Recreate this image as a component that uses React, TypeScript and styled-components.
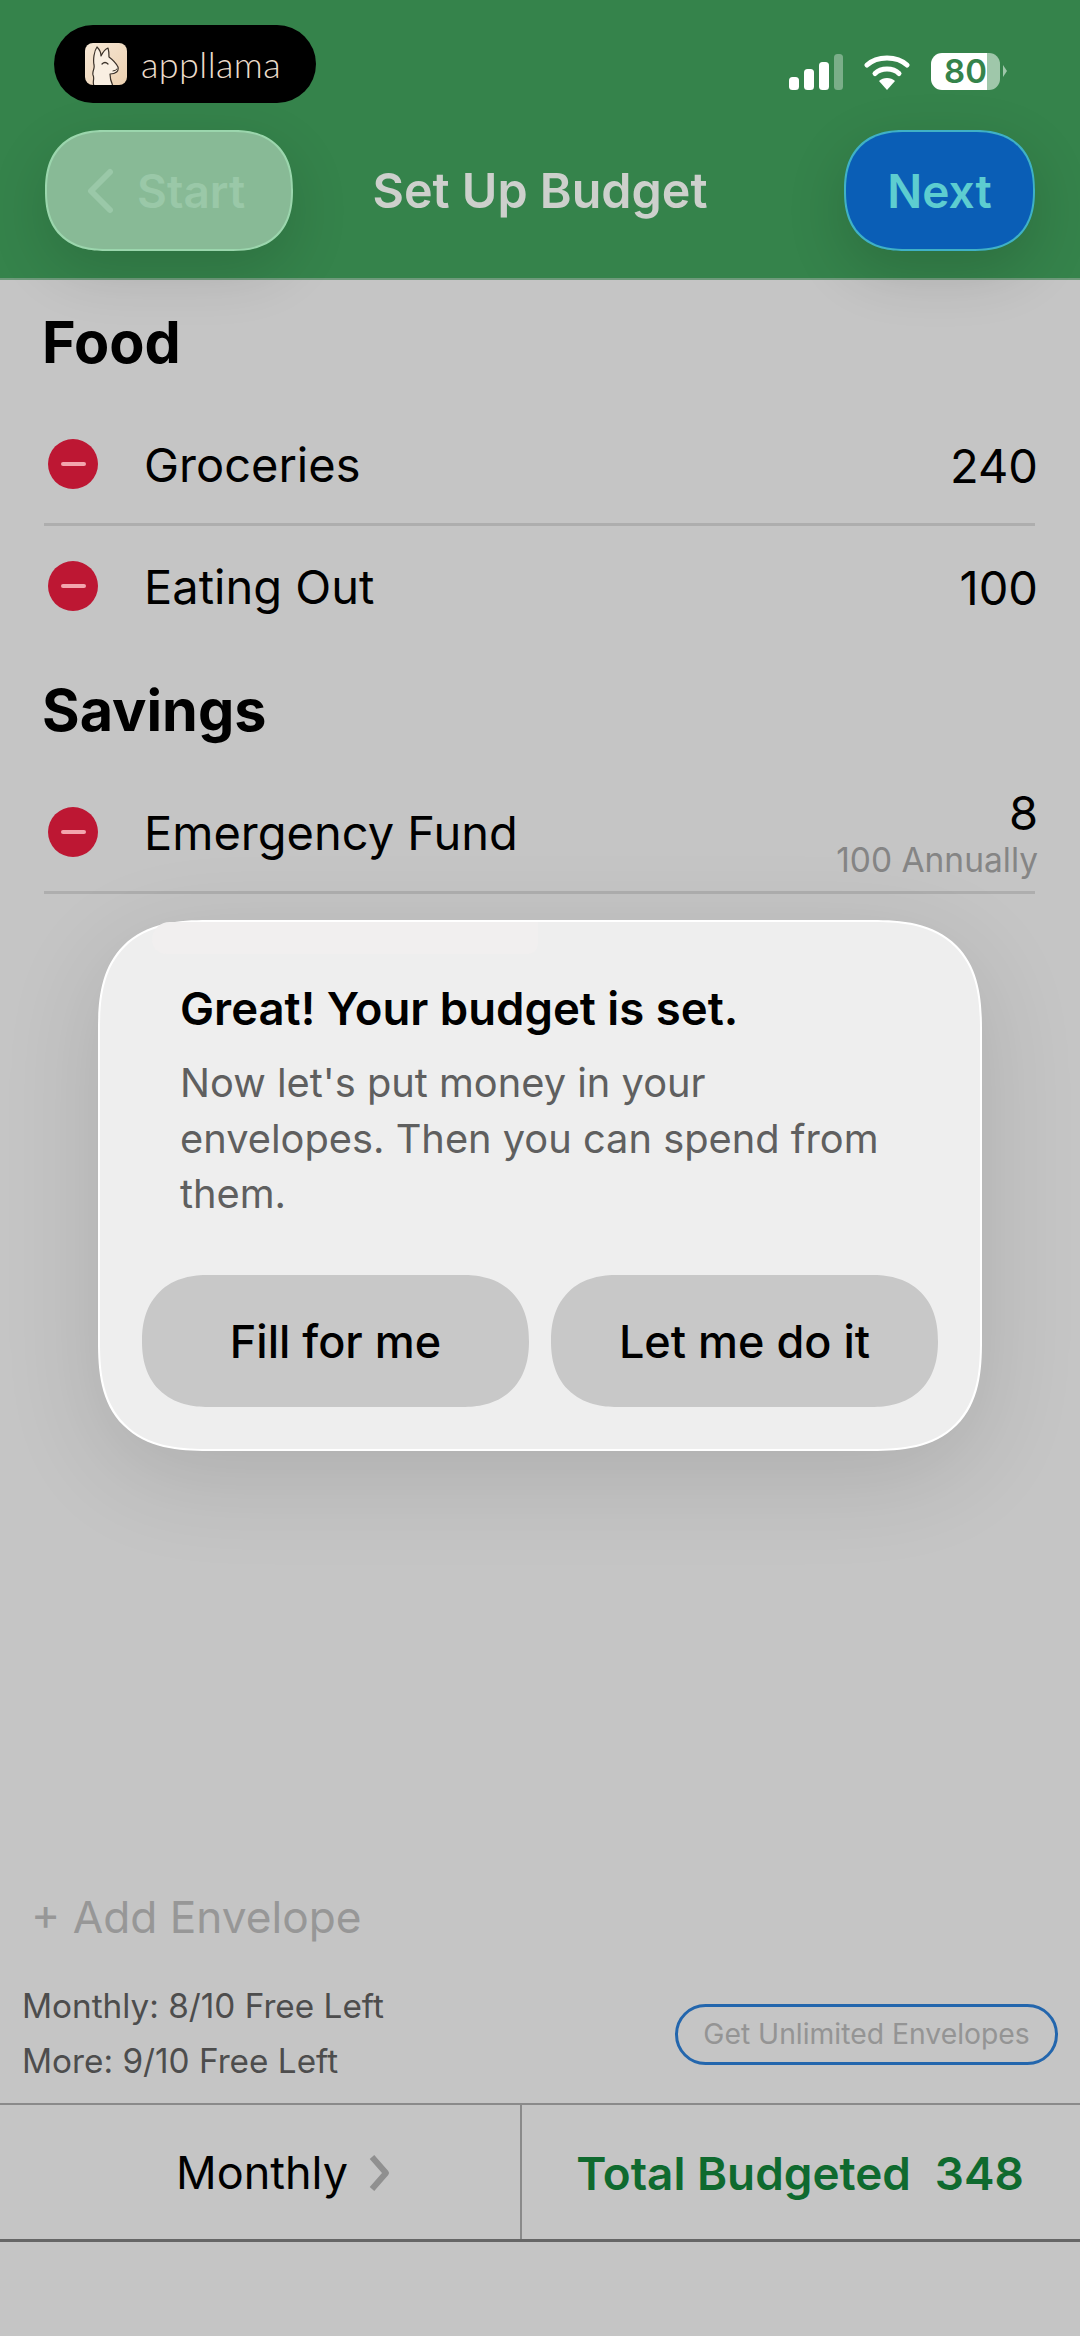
import { FC } from 'react';
import styled, { createGlobalStyle } from 'styled-components';

type IEnvelopeRow = {
  name: string;
  amount: string;
  note?: string;
  divided?: boolean;
};

const GlobalStyle = createGlobalStyle`
  html, body {
    margin: 0;
    padding: 0;
    background: #c5c5c5;
  }
  * {
    box-sizing: border-box;
  }
`;

const EnvelopeRow: FC<IEnvelopeRow> = ({ name, amount, note, divided }) => {
  return (
    <Row $divided={divided}>
      <RemoveBadge>
        <RemoveDash />
      </RemoveBadge>
      <RowName>{name}</RowName>
      <RowAmount>
        <span>{amount}</span>
        {note && <RowNote>{note}</RowNote>}
      </RowAmount>
    </Row>
  );
};

const LlamaIcon = () => (
  <svg width="42" height="42" viewBox="0 0 42 42">
    <defs>
      <linearGradient id="llamaBg" x1="0" y1="0" x2="1" y2="1">
        <stop offset="0" stopColor="#f6e8d6" />
        <stop offset="1" stopColor="#ecd0b0" />
      </linearGradient>
      <clipPath id="llamaClip">
        <rect width="42" height="42" rx="8" />
      </clipPath>
    </defs>
    <rect width="42" height="42" rx="8" fill="url(#llamaBg)" />
    <path
      d="M9 43 C7 38 10 36 8 32 C7 28 10 26 9 22 C8 17 9 8 12 4 C15 7 16 11 16 13 C18 9 20 6 23 5 C24 8 24 11 24 14 C28 17 31 20 33 24 C34 28 31 31 25 31 C25 35 26 39 28 43 Z"
      fill="#f9efe2"
      stroke="#3a3129"
      strokeWidth="1.2"
      strokeLinejoin="round"
      clipPath="url(#llamaClip)"
    />
    <path d="M17 21 Q20 18 23 21" fill="none" stroke="#3a3129" strokeWidth="1.2" strokeLinecap="round" />
    <path d="M28 28 Q30.5 28 32 26" fill="none" stroke="#3a3129" strokeWidth="1" strokeLinecap="round" />
  </svg>
);

const SignalIcon = () => (
  <svg width="54" height="36" viewBox="0 0 54 36">
    <rect x="0" y="23" width="10" height="13" rx="3.5" fill="#fff" />
    <rect x="15" y="15" width="10" height="21" rx="3.5" fill="#fff" />
    <rect x="30" y="8" width="10" height="28" rx="3.5" fill="#fff" />
    <rect x="45" y="0" width="9" height="36" rx="3.5" fill="#fff" fillOpacity="0.35" />
  </svg>
);

const WifiIcon = () => (
  <svg width="46" height="36" viewBox="0 0 46 36">
    <path d="M3 11 C13 1.5 33 1.5 43 11" fill="none" stroke="#fff" strokeWidth="5" strokeLinecap="round" />
    <path d="M11 19.5 C17 13.5 29 13.5 35 19.5" fill="none" stroke="#fff" strokeWidth="5" strokeLinecap="round" />
    <path d="M15 27 C19 23 27 23 31 27 L23 36 Z" fill="#fff" />
  </svg>
);

const BackChevron = () => (
  <svg width="30" height="46" viewBox="0 0 30 46">
    <path d="M25 4 L6 23 L25 42" fill="none" stroke="#9ac8a8" strokeWidth="6" strokeLinecap="round" strokeLinejoin="round" />
  </svg>
);

const ForwardChevron = () => (
  <svg width="22" height="36" viewBox="0 0 22 36">
    <path d="M4 2 L18 18 L4 34" fill="none" stroke="#909090" strokeWidth="6" strokeLinejoin="round" />
  </svg>
);

export default function App() {
  return (
    <Screen>
      <GlobalStyle />
      <Header>
        <StatusBar>
          <AppPill>
            <LlamaIcon />
            <AppName>appllama</AppName>
          </AppPill>
          <StatusGroup>
            <SignalIcon />
            <WifiIcon />
            <Battery>
              <BatteryLabel>80</BatteryLabel>
              <BatteryNub />
            </Battery>
          </StatusGroup>
        </StatusBar>
        <NavBar>
          <StartButton>
            <BackChevron />
            <span>Start</span>
          </StartButton>
          <NavTitle>Set Up Budget</NavTitle>
          <NextButton>Next</NextButton>
        </NavBar>
      </Header>

      <Content>
        <SectionTitle>Food</SectionTitle>
        <EnvelopeRow name="Groceries" amount="240" divided />
        <EnvelopeRow name="Eating Out" amount="100" />
        <SectionTitle $spaced>Savings</SectionTitle>
        <EnvelopeRow name="Emergency Fund" amount="8" note="100 Annually" divided />
      </Content>

      <Spacer />

      <AddEnvelope>+ Add Envelope</AddEnvelope>
      <LimitsRow>
        <LimitsText>
          <div>Monthly: 8/10 Free Left</div>
          <div>More: 9/10 Free Left</div>
        </LimitsText>
        <UnlimitedButton>Get Unlimited Envelopes</UnlimitedButton>
      </LimitsRow>

      <BottomBar>
        <PeriodCell>
          <span>Monthly</span>
          <ForwardChevron />
        </PeriodCell>
        <TotalCell>
          <span>Total Budgeted</span>
          <span>348</span>
        </TotalCell>
      </BottomBar>
      <BottomInset />

      <Modal>
        <ModalTab />
        <ModalTitle>Great! Your budget is set.</ModalTitle>
        <ModalBody>Now let's put money in your envelopes. Then you can spend from them.</ModalBody>
        <ModalActions>
          <ModalButton>Fill for me</ModalButton>
          <ModalButton>Let me do it</ModalButton>
        </ModalActions>
      </Modal>
    </Screen>
  );
}

const Screen = styled.div`
  position: relative;
  width: 1080px;
  height: 2336px;
  display: flex;
  flex-direction: column;
  overflow: hidden;
  background: #c5c5c5;
  font-family: Inter, 'Liberation Sans', sans-serif;
  color: #000;
`;
const Header = styled.header`
  height: 280px;
  flex-shrink: 0;
  padding: 25px 45px 0;
  background: #35834b;
  border-bottom: 2px solid #6f9a7b;
`;
const StatusBar = styled.div`
  display: flex;
  justify-content: space-between;
  align-items: flex-start;
  height: 105px;
`;
const AppPill = styled.div`
  width: 262px;
  height: 78px;
  margin-left: 9px;
  padding-left: 31px;
  display: flex;
  align-items: center;
  gap: 14px;
  border-radius: 39px;
  background: #000;
`;
const AppName = styled.span`
  font-family: Lato, Inter, sans-serif;
  font-weight: 300;
  font-size: 36px;
  letter-spacing: 0.4px;
  color: #ecdccb;
`;
const StatusGroup = styled.div`
  display: flex;
  align-items: center;
  gap: 21px;
  margin: 28px 35px 0 0;
`;
const Battery = styled.div`
  position: relative;
  width: 69px;
  height: 37px;
  display: flex;
  align-items: center;
  justify-content: center;
  border-radius: 11px;
  background: linear-gradient(90deg, #fff 0 81%, #9fc7aa 81% 100%);
`;
const BatteryLabel = styled.span`
  font-size: 33px;
  font-weight: 600;
  color: #35834b;
  line-height: 1;
`;
const BatteryNub = styled.div`
  position: absolute;
  left: 72px;
  top: 12px;
  border-left: 4px solid #9fc7aa;
  border-top: 6px solid transparent;
  border-bottom: 6px solid transparent;
`;
const NavBar = styled.div`
  display: grid;
  grid-template-columns: 1fr auto 1fr;
  align-items: center;
  height: 121px;
`;
const StartButton = styled.div`
  width: 248px;
  height: 121px;
  padding-left: 38px;
  display: flex;
  align-items: center;
  gap: 22px;
  border-radius: 60px;
  corner-shape: superellipse(1.25);
  background: #88ba96;
  border: 2px solid #9bd6ad;
  box-shadow: 0 20px 60px rgba(0, 0, 0, 0.14);
  color: #9ac8a8;
  font-size: 46px;
  font-weight: 600;
`;
const NavTitle = styled.h1`
  margin: 0;
  font-size: 48.4px;
  font-weight: 600;
  color: #cdd0cc;
`;
const NextButton = styled.div`
  width: 191px;
  height: 121px;
  justify-self: end;
  display: flex;
  align-items: center;
  justify-content: center;
  border-radius: 60px;
  corner-shape: superellipse(1.25);
  background: #0a5eb6;
  border: 2px solid #3fb1c6;
  box-shadow: 0 20px 60px rgba(0, 0, 0, 0.16);
  color: #5dcdd0;
  font-size: 46px;
  font-weight: 600;
`;
const Content = styled.main`
  padding: 28px 45px 0 44px;
`;
const SectionTitle = styled.h2<{ $spaced?: boolean }>`
  margin: ${({ $spaced }) => ($spaced ? '28px' : '0')} 0 28px -2px;
  font-size: 57.5px;
  line-height: 68px;
  font-weight: 700;
`;
const Row = styled.div<{ $divided?: boolean }>`
  height: 122px;
  display: flex;
  align-items: center;
  border-bottom: 3px solid ${({ $divided }) => ($divided ? '#aeaeae' : 'transparent')};
`;
const RemoveBadge = styled.div`
  width: 50px;
  height: 50px;
  margin: 0 0 0 4px;
  display: flex;
  align-items: center;
  justify-content: center;
  border-radius: 50%;
  background: #bd1733;
`;
const RemoveDash = styled.div`
  width: 25px;
  height: 4px;
  border-radius: 2px;
  background: #f3a6ae;
`;
const RowName = styled.div`
  margin-left: 46px;
  padding-top: 2px;
  flex: 1;
  font-size: 47px;
`;
const RowAmount = styled.div`
  margin-right: -3px;
  padding-top: 4px;
  display: flex;
  flex-direction: column;
  align-items: flex-end;
  font-size: 47px;
  line-height: 52px;
`;
const RowNote = styled.span`
  font-size: 33.5px;
  line-height: 42px;
  color: #858585;
`;
const Spacer = styled.div`
  flex: 1;
`;
const AddEnvelope = styled.div`
  padding-left: 31px;
  font-size: 44.2px;
  line-height: 56px;
  color: #979797;
`;
const LimitsRow = styled.div`
  display: flex;
  align-items: center;
  justify-content: space-between;
  height: 158px;
  padding: 20px 22px 0;
`;
const LimitsText = styled.div`
  font-size: 33.3px;
  line-height: 55px;
  color: #4d4d4d;
`;
const UnlimitedButton = styled.div`
  width: 383px;
  height: 61px;
  display: flex;
  align-items: center;
  justify-content: center;
  border: 3px solid #2366ad;
  border-radius: 31px;
  font-size: 28.3px;
  color: #949494;
`;
const BottomBar = styled.div`
  height: 139px;
  display: grid;
  grid-template-columns: 522px 1fr;
  border-top: 2px solid #8a8a8a;
  border-bottom: 3px solid #666;
  font-size: 45.8px;
`;
const PeriodCell = styled.div`
  display: flex;
  align-items: center;
  justify-content: center;
  gap: 20px;
  padding: 1px 0 0 46px;
  font-size: 45px;
  border-right: 2px solid #8a8a8a;
`;
const TotalCell = styled.div`
  display: flex;
  align-items: center;
  justify-content: center;
  gap: 24px;
  padding: 2px 2px 0 0;
  font-weight: 600;
  color: #0f6a2f;
`;
const BottomInset = styled.div`
  height: 94px;
`;
const Modal = styled.section`
  position: absolute;
  left: 98px;
  top: 920px;
  width: 884px;
  height: 531px;
  padding: 59px 42px 0;
  border: 2px solid #fff;
  border-radius: 110px;
  corner-shape: superellipse(1.4);
  background: #eeeeee;
  box-shadow: 0 25px 100px rgba(0, 0, 0, 0.12);
`;
const ModalTab = styled.div`
  position: absolute;
  left: 52px;
  top: 0;
  width: 386px;
  height: 32px;
  border-radius: 50px 0 30px 40px;
  background: #f1efef;
`;
const ModalTitle = styled.h3`
  margin: 0 0 0 38px;
  font-size: 45.5px;
  line-height: 56px;
  font-weight: 600;
`;
const ModalBody = styled.p`
  margin: 18px 0 0 38px;
  width: 730px;
  font-size: 39.8px;
  line-height: 55.5px;
  color: #5f5f5f;
`;
const ModalActions = styled.div`
  display: flex;
  gap: 22px;
  margin-top: 53px;
`;
const ModalButton = styled.div`
  width: 388px;
  height: 132px;
  padding-top: 2px;
  display: flex;
  align-items: center;
  justify-content: center;
  border-radius: 66px;
  corner-shape: superellipse(1.2);
  background: #c8c8c8;
  font-size: 45px;
  font-weight: 500;
`;
